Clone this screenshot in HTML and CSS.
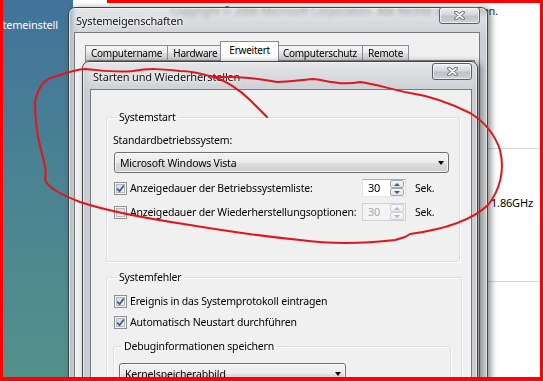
FILE: index.html
```html
<!DOCTYPE html>
<html lang="de">
<head>
  <meta charset="UTF-8" />
  <title>Systemeigenschaften – Starten und Wiederherstellen</title>
  <link rel="stylesheet" href="styles.css">
</head>
<body>
  <div class="screen">

    <!-- Systemsteuerung im Hintergrund -->
    <div class="side">
      <span class="side-link">Systemeinstell</span>
    </div>
    <span class="copyright">Copyright © 2006 Microsoft Corporation. Alle Rechte vorbehalten.</span>
    <div class="rule rule--a"></div>
    <div class="rule rule--b"></div>
    <span class="cpu">1.86GHz</span>

    <!-- Systemeigenschaften -->
    <div class="win win--outer">
      <div class="win-title"><span>Systemeigenschaften</span></div>
      <div class="close">
        <svg width="11" height="9" viewBox="0 0 11 9"><path d="M2 1.5 L9 7.5 M9 1.5 L2 7.5" stroke="#5d6167" stroke-width="3.6" stroke-linecap="round"/><path d="M2 1.5 L9 7.5 M9 1.5 L2 7.5" stroke="#fff" stroke-width="1.8" stroke-linecap="round"/></svg>
      </div>
      <div class="client">
        <div class="tabs">
          <div class="tab">Computername</div>
          <div class="tab">Hardware</div>
          <div class="tab tab--active">Erweitert</div>
          <div class="tab">Computerschutz</div>
          <div class="tab">Remote</div>
        </div>
        <div class="tab-page"></div>
      </div>
    </div>

    <!-- Starten und Wiederherstellen -->
    <div class="win win--inner">
      <div class="win-title"><span>Starten und Wiederherstellen</span></div>
      <div class="close">
        <svg width="11" height="9" viewBox="0 0 11 9"><path d="M2 1.5 L9 7.5 M9 1.5 L2 7.5" stroke="#5d6167" stroke-width="3.6" stroke-linecap="round"/><path d="M2 1.5 L9 7.5 M9 1.5 L2 7.5" stroke="#fff" stroke-width="1.8" stroke-linecap="round"/></svg>
      </div>
      <div class="client client--dialog">

        <fieldset class="group">
          <legend>Systemstart</legend>
          <div class="field-label">Standardbetriebssystem:</div>
          <div class="combo">
            <span>Microsoft Windows Vista</span>
            <span class="combo-arrow"></span>
          </div>

          <div class="row">
            <span class="check check--on">
              <svg viewBox="0 0 11 11"><path d="M2.3 5.6 L4.6 8.2 L8.8 2.4" fill="none" stroke="#3f5686" stroke-width="1.7"/></svg>
            </span>
            <span class="row-label">Anzeigedauer der Betriebssystemliste:</span>
            <span class="spin">
              <span class="spin-value">30</span>
              <span class="spin-btns">
                <span class="spin-btn"><span class="arrow-up"></span></span>
                <span class="spin-btn"><span class="arrow-down"></span></span>
              </span>
            </span>
            <span class="unit">Sek.</span>
          </div>

          <div class="row">
            <span class="check"></span>
            <span class="row-label">Anzeigedauer der Wiederherstellungsoptionen:</span>
            <span class="spin spin--disabled">
              <span class="spin-value">30</span>
              <span class="spin-btns">
                <span class="spin-btn"><span class="arrow-up"></span></span>
                <span class="spin-btn"><span class="arrow-down"></span></span>
              </span>
            </span>
            <span class="unit">Sek.</span>
          </div>
        </fieldset>

        <fieldset class="group group--errors">
          <legend>Systemfehler</legend>
          <div class="check-row">
            <span class="check check--on">
              <svg viewBox="0 0 11 11"><path d="M2.3 5.6 L4.6 8.2 L8.8 2.4" fill="none" stroke="#3f5686" stroke-width="1.7"/></svg>
            </span>
            <span>Ereignis in das Systemprotokoll eintragen</span>
          </div>
          <div class="check-row">
            <span class="check check--on">
              <svg viewBox="0 0 11 11"><path d="M2.3 5.6 L4.6 8.2 L8.8 2.4" fill="none" stroke="#3f5686" stroke-width="1.7"/></svg>
            </span>
            <span>Automatisch Neustart durchführen</span>
          </div>

          <fieldset class="subgroup">
            <legend>Debuginformationen speichern</legend>
            <div class="combo combo--small">
              <span>Kernelspeicherabbild</span>
              <span class="combo-arrow"></span>
            </div>
          </fieldset>
        </fieldset>

      </div>
    </div>

    <!-- rote Markierung -->
    <svg class="scribble" viewBox="0 0 543 381">
      <path d="M267,117 L250,100 C240,90 225,80 213,77 C200,73 190,71 180,71 C160,69 150,68 133,71 C115,73 100,70 85,69 C70,70 60,76 50,78 C42,82 37,92 35,102 C35,115 37,135 41,150 C44,162 47,170 45,180 C50,190 65,196 80,202 C110,212 150,219 190,225 C220,230 250,235 300,240 C330,244 360,244 395,240 L405,237 L410,234 C440,230 470,222 488,205 C500,190 505,170 500,150 C495,135 485,122 470,113 C450,103 430,96 410,93 C390,89 375,84 360,82 C340,86 325,80 313,79 C300,80 290,82 277,82 C265,80 250,77 230,77 L213,77" />
    </svg>

    <div class="red-top"></div>
    <div class="red-frame"></div>
  </div>
</body>
</html>
```

FILE: styles.css
```css
* {
  box-sizing: border-box;
}

body {
  margin: 0;
  background: #fff;
}

.screen {
  position: relative;
  width: 543px;
  height: 381px;
  overflow: hidden;
  background: #fff;
  font: 10.5px/14px "Noto Sans", "Segoe UI", sans-serif;
  letter-spacing: -0.18px;
  color: #000;
}

/* Hintergrund: Systemsteuerung */
.side {
  position: absolute;
  left: 0;
  top: 0;
  bottom: 0;
  width: 73px;
  padding-top: 18px;
  background: linear-gradient(#42729a, #4a8293 45%, #53918a);
  color: #fff;
}

.side-link {
  display: block;
  margin-left: -14px;
  white-space: nowrap;
  font-size: 11px;
}

.copyright {
  position: absolute;
  right: 45px;
  top: 4px;
  white-space: nowrap;
  font-size: 11px;
  color: #1e1e1e;
}

.rule {
  position: absolute;
  left: 300px;
  right: 0;
  height: 1px;
  background: #d6d6d6;
}

.rule--a { top: 148px; }
.rule--b { top: 281px; }

.cpu {
  position: absolute;
  top: 196px;
  left: 491px;
  white-space: nowrap;
  font-size: 11px;
}

/* Fenster */
.win {
  position: absolute;
  display: flex;
  flex-direction: column;
  border: 1px solid #40444a;
  border-radius: 7px 7px 0 0;
  background: linear-gradient(rgba(212, 215, 219, 0.62), rgba(196, 200, 205, 0.88) 30px);
  backdrop-filter: blur(2px);
  box-shadow: inset 0 0 0 1px rgba(255, 255, 255, 0.55), 3px 1px 6px rgba(0, 0, 0, 0.45);
}

.win--outer {
  left: 68px;
  top: 7px;
  width: 420px;
  height: 400px;
}

.win--inner {
  left: 82px;
  top: 61px;
  width: 396px;
  height: 340px;
}

.win-title {
  flex: none;
  height: 24px;
  line-height: 25px;
  padding-left: 7px;
  font-size: 11px;
  color: #111;
  text-shadow: 0 0 5px #fff, 0 0 2px #fff;
}

.win--inner .win-title {
  height: 27px;
  line-height: 29px;
  padding-left: 10px;
}

.close {
  position: absolute;
  top: -1px;
  right: 7px;
  width: 41px;
  height: 17px;
  display: flex;
  align-items: center;
  justify-content: center;
  border: 1px solid #5a5e64;
  border-radius: 3px;
  background: linear-gradient(#eef0f2, #d3d6da 48%, #bcc1c6 52%, #cdd1d6);
  box-shadow: inset 0 0 0 1px rgba(255, 255, 255, 0.6);
}

.win--inner .close {
  top: 1px;
  right: 5px;
  width: 40px;
}

.client {
  flex: 1;
  margin: 0 7px 0 5px;
  border: 1px solid #767a80;
  border-bottom: none;
  background: #f0f0f0;
}

.win--inner .client {
  margin: 0 5px 0 7px;
}

/* Registerkarten */
.tabs {
  display: flex;
  align-items: flex-end;
  height: 27px;
  padding-left: 10px;
  font-size: 10px;
  letter-spacing: -0.25px;
}

.tab {
  height: 15px;
  line-height: 15px;
  padding: 0 5px;
  margin-right: -1px;
  border: 1px solid #898c95;
  border-bottom: none;
  background: linear-gradient(#f3f3f3, #ebebeb 50%, #dddddd 51%, #cfcfcf);
  white-space: nowrap;
}

.tab--active {
  position: relative;
  z-index: 1;
  height: 20px;
  line-height: 17px;
  margin: 0 -2px -1px;
  padding: 0 8px;
  background: #fff;
}

.tab-page {
  height: 400px;
  margin: 0 4px 0 10px;
  border: 1px solid #898c95;
  background: #fff;
}

/* Dialog-Inhalt */
.client--dialog {
  padding: 20px 0 0 15px;
}

.group {
  width: 354px;
  margin: 0;
  padding: 0 10px 40px 6px;
  border: 1px solid #d5dfe5;
  border-radius: 3px;
  box-shadow: inset 1px 1px 0 #fff, 1px 1px 0 #fff;
}

.group legend {
  margin-left: 4px;
  padding: 0 2px;
  line-height: 14px;
}

.group--errors {
  margin-top: 8px;
  padding-bottom: 0;
}

.field-label {
  margin-top: 9px;
  line-height: 14px;
}

.combo {
  display: flex;
  align-items: center;
  justify-content: space-between;
  width: 335px;
  height: 21px;
  margin: 5px 0 0 1px;
  padding: 0 4px 0 5px;
  border: 1px solid #707070;
  border-radius: 3px;
  background: linear-gradient(#f2f2f2, #ebebeb 50%, #dddddd 51%, #cfcfcf);
  box-shadow: inset 0 0 0 1px rgba(255, 255, 255, 0.7);
}

.combo-arrow {
  width: 0;
  height: 0;
  border-top: 4px solid #000;
  border-left: 3.5px solid transparent;
  border-right: 3.5px solid transparent;
}

.row {
  display: grid;
  grid-template-columns: 16px 232px 44px auto;
  align-items: center;
  height: 18px;
  margin: 6px 0 0 1px;
}

.row-label {
  white-space: nowrap;
  overflow: hidden;
}

.row .unit {
  margin-left: 9px;
}

.check-row {
  display: flex;
  align-items: center;
  gap: 3px;
  height: 16px;
  margin: 9px 0 0 1px;
}

.check-row + .check-row {
  margin-top: 5px;
}

.check {
  position: relative;
  display: block;
  width: 13px;
  height: 13px;
  border: 1px solid #8e8f8f;
  background: linear-gradient(135deg, #cdd1d6, #f7f8f9);
  box-shadow: inset 0 0 0 1px #f4f4f4, inset 0 0 0 2px #b3b8be;
}

.check svg {
  position: absolute;
  left: 0;
  top: 0;
  width: 11px;
  height: 11px;
}

.spin {
  display: flex;
  height: 18px;
  border: 1px solid;
  border-color: #abadb3 #dbdfe6 #e3e9ef #e2e3ea;
  background: #fff;
}

.spin-value {
  flex: 1;
  padding-left: 5px;
  line-height: 16px;
  font-size: 11px;
}

.spin-btns {
  display: flex;
  flex-direction: column;
  width: 15px;
  padding: 0 1px 0 0;
}

.spin-btn {
  flex: 1;
  display: flex;
  align-items: center;
  justify-content: center;
  border: 1px solid #a3a9b1;
  border-radius: 2px;
  background: linear-gradient(#f4f6f8, #dde3ea);
}

.arrow-up,
.arrow-down {
  width: 0;
  height: 0;
  border-left: 3px solid transparent;
  border-right: 3px solid transparent;
}

.arrow-up { border-bottom: 3px solid #4f5b6a; }
.arrow-down { border-top: 3px solid #4f5b6a; }

.spin--disabled {
  border-color: #cfd1d5;
  background: #f4f4f4;
  color: #a6a6a6;
}

.spin--disabled .spin-btn {
  border-color: #cdd1d6;
  background: linear-gradient(#f7f7f8, #eceef0);
}

.spin--disabled .arrow-up { border-bottom-color: #b3b8be; }
.spin--disabled .arrow-down { border-top-color: #b3b8be; }

.subgroup {
  width: 338px;
  margin: 9px 0 0;
  padding: 0 0 20px 5px;
  border: 1px solid #d5dfe5;
  border-radius: 3px;
  box-shadow: inset 1px 1px 0 #fff, 1px 1px 0 #fff;
}

.subgroup legend {
  margin-left: 3px;
  padding: 0 2px;
  line-height: 14px;
}

.combo--small {
  width: 227px;
  margin: 10px 0 0;
}

/* Markierung */
.scribble {
  position: absolute;
  left: 0;
  top: 0;
  width: 543px;
  height: 381px;
  pointer-events: none;
}

.scribble path {
  fill: none;
  stroke: #e3141b;
  stroke-width: 2;
  stroke-linecap: round;
  stroke-linejoin: round;
}

.red-top {
  position: absolute;
  left: 107px;
  right: 0;
  top: 0;
  height: 3px;
  background: #f00;
}

.red-frame {
  position: absolute;
  left: 0;
  top: 0;
  right: 0;
  bottom: 0;
  border: 3px solid #f00;
  border-top: none;
  border-bottom-width: 4px;
  pointer-events: none;
}
```
